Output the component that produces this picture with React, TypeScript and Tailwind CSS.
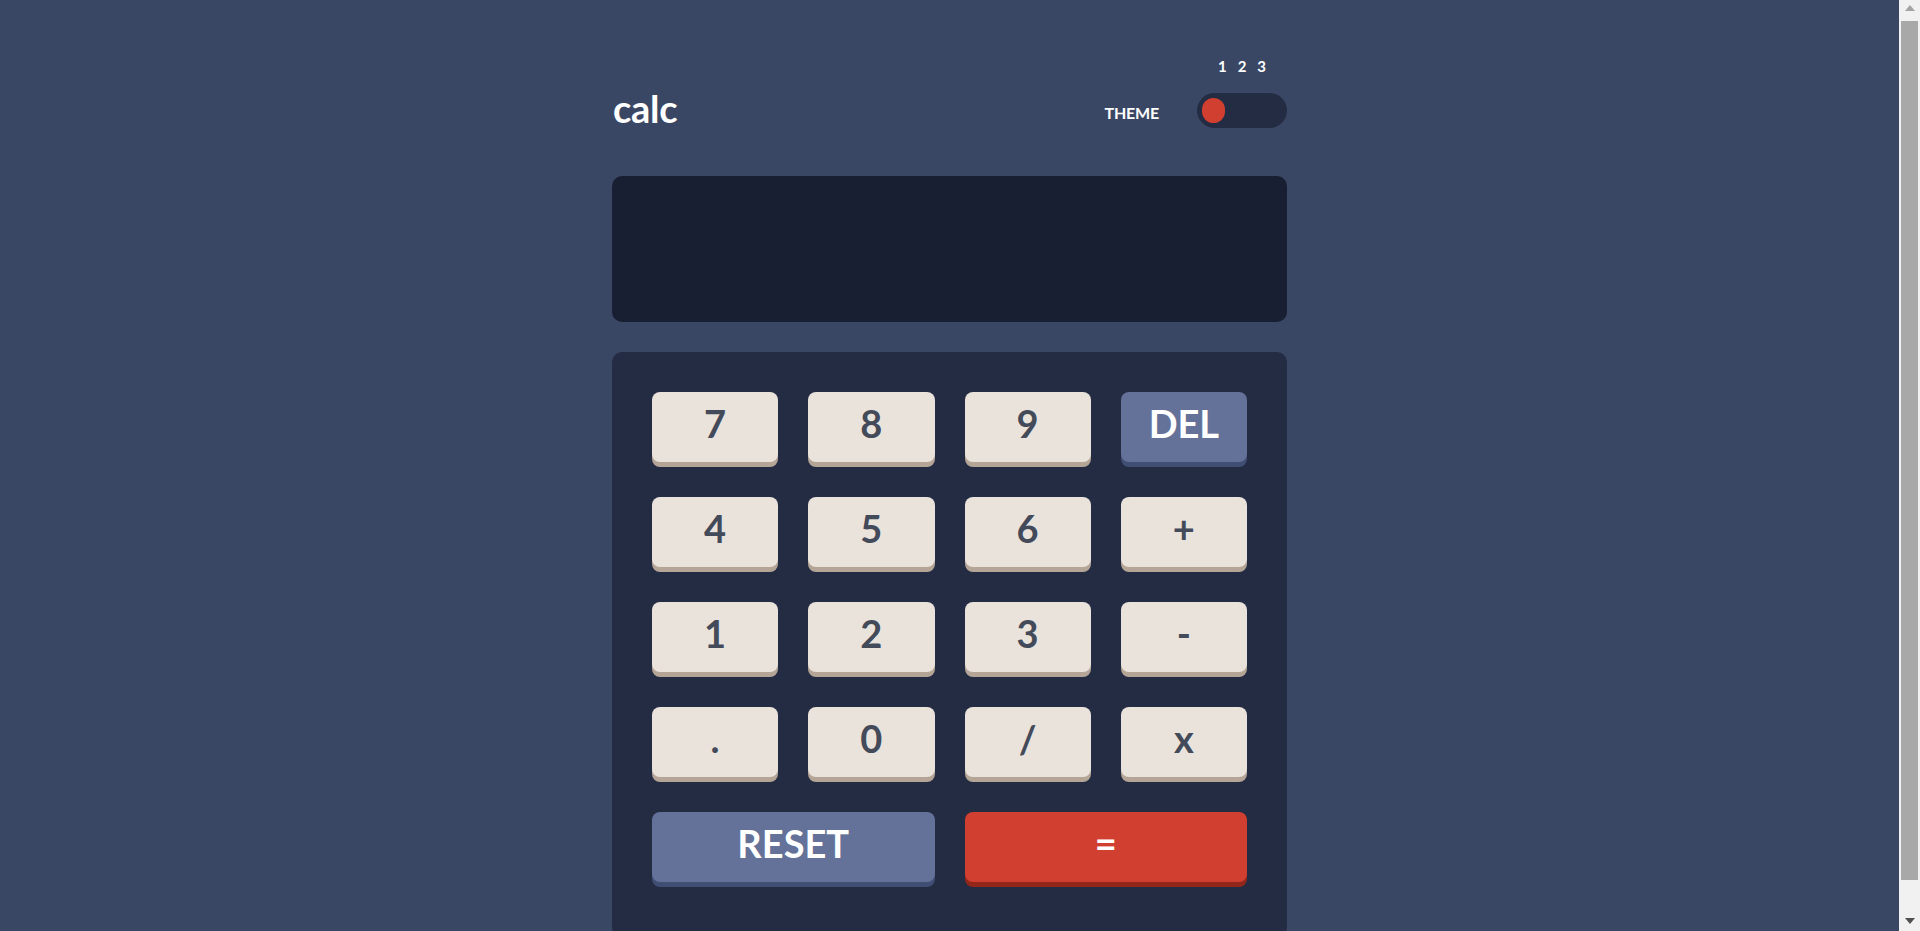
import type { ReactNode } from "react";

type KeyVariant = "plain" | "muted" | "accent";

interface KeyProps {
  label: string;
  variant?: KeyVariant;
  wide?: boolean;
}

const variantClasses: Record<KeyVariant, string> = {
  plain: "bg-[#eae3dc] text-[#434a59] shadow-[0_5px_0_#b4a597]",
  muted: "bg-[#647198] text-white shadow-[0_5px_0_#414e73]",
  accent: "bg-[#d03f2f] text-white shadow-[0_5px_0_#93261a]",
};

function Key({ label, variant = "plain", wide = false }: KeyProps) {
  return (
    <button
      className={`flex h-[70px] items-center justify-center rounded-[8px] pb-[9px] text-[38px] font-bold leading-none ${
        variantClasses[variant]
      } ${wide ? "col-span-2" : ""}`}
    >
      {label}
    </button>
  );
}

function Header(): ReactNode {
  return (
    <header className="flex items-end justify-between pl-px">
      <h1 className="flex h-[35px] items-center pb-[5px] text-[38px] font-bold leading-none tracking-[-0.3px] text-white">
        calc
      </h1>
      <div className="flex items-end gap-[38px]">
        <span className="flex h-[35px] items-center pt-[4px] text-[16px] font-bold leading-none tracking-[-0.2px] text-white">
          THEME
        </span>
        <div className="flex flex-col">
          <div className="mb-[18px] flex h-[18px] items-center justify-center gap-[11px] text-[15px] font-bold leading-none text-white">
            <span>1</span>
            <span>2</span>
            <span>3</span>
          </div>
          <div className="flex h-[35px] w-[90px] items-center rounded-full bg-[#232c43] px-[5px]">
            <div className="h-[25px] w-[23px] rounded-full bg-[#d03f2f]" />
          </div>
        </div>
      </div>
    </header>
  );
}

// page scrollbar as seen in the reference
function ScrollTrack() {
  return (
    <div className="fixed right-0 top-0 flex h-screen w-[21px] flex-col items-center bg-[#f1f1f1]">
      <svg width="10" height="6" viewBox="0 0 10 6" className="mt-[5px]">
        <path d="M0 6 L5 0 L10 6 Z" fill="#a3a3a3" />
      </svg>
      <div className="mt-[10px] h-[859px] w-[17px] bg-[#a8a8a8]" />
      <svg width="10" height="6" viewBox="0 0 10 6" className="mt-auto mb-[7px]">
        <path d="M0 0 L10 0 L5 6 Z" fill="#505050" />
      </svg>
    </div>
  );
}

export default function App() {
  const rows: KeyProps[] = [
    { label: "7" },
    { label: "8" },
    { label: "9" },
    { label: "DEL", variant: "muted" },
    { label: "4" },
    { label: "5" },
    { label: "6" },
    { label: "+" },
    { label: "1" },
    { label: "2" },
    { label: "3" },
    { label: "-" },
    { label: "." },
    { label: "0" },
    { label: "/" },
    { label: "x" },
    { label: "RESET", variant: "muted", wide: true },
    { label: "=", variant: "accent", wide: true },
  ];

  return (
    <div className="min-h-screen bg-[#3a4764] pb-[35px] pr-[21px] pt-[57px] font-['Lato',sans-serif]">
      <div className="mx-auto w-[675px]">
        <Header />

        <div className="mt-[48px] h-[146px] rounded-[10px] bg-[#181f32]" />

        <div className="mt-[30px] grid grid-cols-4 gap-x-[30px] gap-y-[35px] rounded-[10px] bg-[#232c43] px-[40px] pb-[55px] pt-[40px]">
          {rows.map((key) => (
            <Key key={key.label} {...key} />
          ))}
        </div>
      </div>
      <ScrollTrack />
    </div>
  );
}
